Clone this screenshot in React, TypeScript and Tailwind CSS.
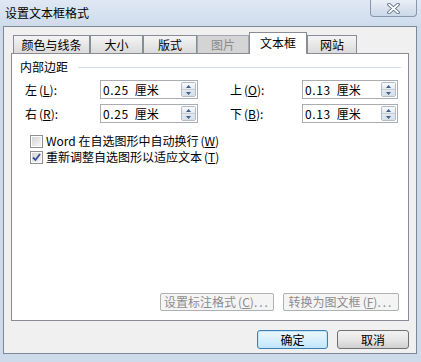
import React from "react"

const tabs = [
    { label: "颜色与线条", w: "w-[77px]", state: "normal" },
    { label: "大小", w: "w-[53px]", state: "normal" },
    { label: "版式", w: "w-[54px]", state: "normal" },
    { label: "图片", w: "w-[52px]", state: "disabled" },
    { label: "文本框", w: "w-[58px]", state: "active" },
    { label: "网站", w: "w-[50px]", state: "normal" },
]

const Key = ({ k }: { k: string }) => (
    <span className="ml-[2px]">
        (<span className="underline">{k}</span>)
    </span>
)

const Spinner = () => (
    <div className="w-[15px] h-[15px] mr-px border border-[#b3bdca] rounded-[2px] flex flex-col overflow-hidden">
        <div className="flex-1 flex items-center justify-center bg-gradient-to-b from-[#f7f9fb] to-[#e6ebf1] border-b border-[#c3ccd7]">
            <svg width="5" height="3" viewBox="0 0 5 3"><path d="M0 3 L2.5 0 L5 3 Z" fill="#3f5d8c" /></svg>
        </div>
        <div className="flex-1 flex items-center justify-center bg-gradient-to-b from-[#e3e9f0] to-[#d6dee8]">
            <svg width="5" height="3" viewBox="0 0 5 3"><path d="M0 0 L5 0 L2.5 3 Z" fill="#3f5d8c" /></svg>
        </div>
    </div>
)

const NumBox = ({ num, w }: { num: string; w: string }) => (
    <div className={`${w} h-[19px] border border-[#abadb3] bg-white flex items-center justify-between pl-[2px]`}>
        <span className="leading-[14px]">
            <span className="tracking-[0.6px]">{num}</span>
            <span className="ml-[6px]">厘米</span>
        </span>
        <Spinner />
    </div>
)

const Check = ({ checked }: { checked: boolean }) => (
    <div className="w-[13px] h-[13px] border border-[#8e8f8f] bg-white p-px shrink-0">
        <div className="w-full h-full bg-gradient-to-br from-[#d5d5d5] to-[#f6f6f6] flex items-center justify-center">
            {checked && (
                <svg width="9" height="9" viewBox="0 0 9 9">
                    <path d="M1 4.5 L3.5 7 L8 1" stroke="#34509a" strokeWidth="1.8" fill="none" />
                </svg>
            )}
        </div>
    </div>
)

const App = () => {
    return (
        <div className="w-[421px] h-[362px] bg-[#cddaea] flex flex-col overflow-hidden text-[12px] text-black font-['Noto_Sans_CJK_SC','Noto_Sans',sans-serif]">
            {/* title bar */}
            <div className="h-[26px] shrink-0 flex items-start bg-gradient-to-b from-[#dfe8f3] to-[#cfdcec]">
                <span className="pl-[5px] pt-[6px] leading-[14px]">设置文本框格式</span>
                <div className="ml-auto mr-[4px] w-[47px] h-[17px] rounded-b-[4px] border border-t-0 border-[#8797ad] bg-gradient-to-b from-[#e9eff6] to-[#cbd8e8] flex items-center justify-center">
                    <svg width="13" height="11" viewBox="0 0 13 11">
                        <path d="M2 1.5 L11 9.5 M11 1.5 L2 9.5" stroke="#5b6b82" strokeWidth="3.6" strokeLinecap="round" />
                        <path d="M2 1.5 L11 9.5 M11 1.5 L2 9.5" stroke="#ffffff" strokeWidth="1.7" strokeLinecap="round" />
                    </svg>
                </div>
            </div>

            {/* client area */}
            <div className="ml-[3px] w-[414px] h-[328px] border border-[#7d8897] bg-[#f0f0f0] flex flex-col">
                <div className="mt-[5px] pl-[9px] h-[21px] flex items-end">
                    {tabs.map((t) =>
                        t.state === "active" ? (
                            <div key={t.label} className={`${t.w} h-[22px] -mb-px relative z-10 bg-white border border-b-0 border-[#898c95] flex items-center justify-center pb-px leading-[14px]`}>
                                {t.label}
                            </div>
                        ) : t.state === "disabled" ? (
                            <div key={t.label} className={`${t.w} h-[18px] bg-[#d4d4d4] border border-b-0 border-[#a4a7ad] text-[#8a8a8a] flex items-center justify-center leading-[14px]`}>
                                {t.label}
                            </div>
                        ) : (
                            <div key={t.label} className={`${t.w} h-[18px] bg-gradient-to-b from-[#f4f4f4] to-[#dbdbdb] border border-b-0 border-[#898c95] flex items-center justify-center leading-[14px]`}>
                                {t.label}
                            </div>
                        )
                    )}
                </div>

                {/* tab panel */}
                <div className="ml-[7px] w-[398px] h-[268px] border border-[#898c95] bg-white flex flex-col">
                    <div className="mt-[6px] h-[14px] flex items-center pl-[8px] pr-[7px] gap-[10px]">
                        <span className="leading-[14px]">内部边距</span>
                        <div className="flex-1 h-px bg-[#d5dfe5]" />
                    </div>

                    <div className="mt-[6px] flex items-center pl-[13px]">
                        <span className="w-[75px] leading-[14px]">左<Key k="L" />:</span>
                        <NumBox num="0.25" w="w-[98px]" />
                        <span className="ml-[32px] w-[72px] leading-[14px]">上<Key k="O" />:</span>
                        <NumBox num="0.13" w="w-[96px]" />
                    </div>
                    <div className="mt-[5px] flex items-center pl-[13px]">
                        <span className="w-[75px] leading-[14px]">右<Key k="R" />:</span>
                        <NumBox num="0.25" w="w-[98px]" />
                        <span className="ml-[32px] w-[72px] leading-[14px]">下<Key k="B" />:</span>
                        <NumBox num="0.13" w="w-[96px]" />
                    </div>

                    <div className="mt-[10px] pl-[18px] flex flex-col">
                        <div className="h-[16px] flex items-center gap-[3px]">
                            <Check checked={false} />
                            <span className="leading-[14px]">Word 在自选图形中自动换行<Key k="W" /></span>
                        </div>
                        <div className="h-[16px] flex items-center gap-[3px]">
                            <Check checked={true} />
                            <span className="leading-[14px]">重新调整自选图形以适应文本<Key k="T" /></span>
                        </div>
                    </div>

                    <div className="mt-auto mb-[9px] pr-[9px] flex justify-end gap-[9px]">
                        <div className="w-[114px] h-[18px] border border-[#adb2b5] rounded-[2px] bg-[#f4f4f4] text-[#8c8c8c] flex items-center justify-center leading-[14px]">
                            设置标注格式<Key k="C" /><span className="tracking-[2px]">...</span>
                        </div>
                        <div className="w-[116px] h-[18px] border border-[#adb2b5] rounded-[2px] bg-[#f4f4f4] text-[#8c8c8c] flex items-center justify-center leading-[14px]">
                            转换为图文框<Key k="F" /><span className="tracking-[2px]">...</span>
                        </div>
                    </div>
                </div>

                <div className="mt-[9px] pr-[7px] flex justify-end gap-[9px]">
                    <button className="w-[71px] h-[19px] rounded-[3px] border border-[#3c7fb1] bg-gradient-to-b from-[#eaf6fd] via-[#d9f0fc] to-[#bee6fd] shadow-[inset_0_0_0_1px_#c4e5f6] flex items-center justify-center leading-[14px]">
                        确定
                    </button>
                    <button className="w-[72px] h-[19px] rounded-[3px] border border-[#707070] bg-gradient-to-b from-[#f2f2f2] via-[#e6e6e6] to-[#d0d0d0] flex items-center justify-center leading-[14px]">
                        取消
                    </button>
                </div>
            </div>
        </div>
    )
}

export default App
